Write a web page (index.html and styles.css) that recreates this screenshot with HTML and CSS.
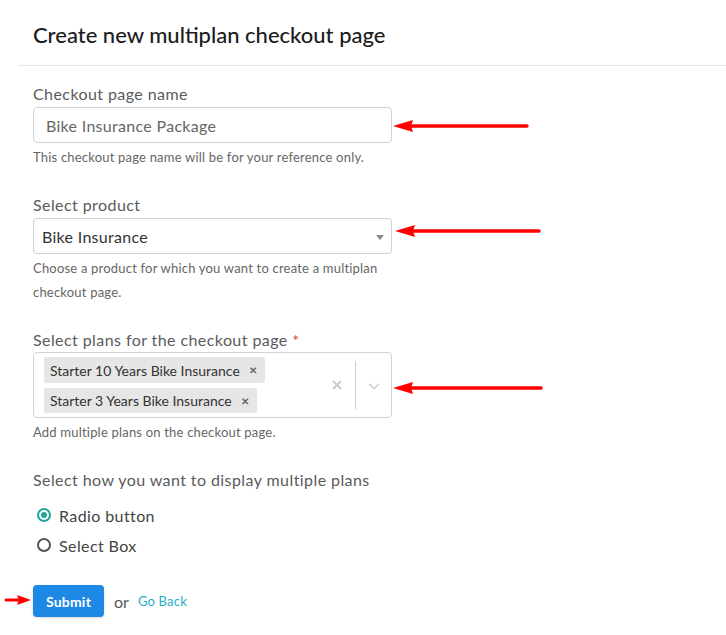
FILE: index.html
```html
<!DOCTYPE html>
<html>
<head>
<meta charset="utf-8">
<link rel="stylesheet" href="styles.css">
</head>
<body>
<div class="page">
  <div class="header">
    <h1 class="title">Create new multiplan checkout page</h1>
  </div>
  <form class="form">
    <div class="field field-first">
      <label class="label">Checkout page name</label>
      <div class="input">Bike Insurance Package</div>
      <div class="help">This checkout page name will be for your reference only.</div>
      <svg class="arrow arrow-1" width="140" height="16" viewBox="0 0 140 16"><path d="M18 8 H134" stroke="#f00" stroke-width="3.4" stroke-linecap="round"/><path d="M0 8 L20 2 L18 8 L20 14 Z" fill="#f00"/></svg>
    </div>
    <div class="field">
      <label class="label">Select product</label>
      <div class="select">
        <span class="select-value">Bike Insurance</span>
        <span class="caret"></span>
      </div>
      <div class="help">Choose a product for which you want to create a multiplan checkout page.</div>
      <svg class="arrow arrow-2" width="150" height="16" viewBox="0 0 150 16"><path d="M18 8 H144" stroke="#f00" stroke-width="3.4" stroke-linecap="round"/><path d="M0 8 L20 2 L18 8 L20 14 Z" fill="#f00"/></svg>
    </div>
    <div class="field">
      <label class="label">Select plans for the checkout page <span class="req">*</span></label>
      <div class="multi">
        <div class="tags">
          <span class="tag"><span class="tag-text">Starter 10 Years Bike Insurance</span><span class="tag-x">&#x2715;</span></span>
          <span class="tag"><span class="tag-text">Starter 3 Years Bike Insurance</span><span class="tag-x">&#x2715;</span></span>
        </div>
        <div class="indicators">
          <svg class="clear" width="12" height="12" viewBox="0 0 12 12"><path d="M2 2 L10 10 M10 2 L2 10" stroke="#ccc" stroke-width="2"/></svg>
          <span class="sep"></span>
          <svg class="chev" width="14" height="10" viewBox="0 0 14 10"><path d="M2 3 L7 7.5 L12 3" stroke="#ccc" stroke-width="1.6" fill="none"/></svg>
        </div>
      </div>
      <div class="help">Add multiple plans on the checkout page.</div>
      <svg class="arrow arrow-3" width="152" height="16" viewBox="0 0 152 16"><path d="M18 8 H148" stroke="#f00" stroke-width="3.4" stroke-linecap="round"/><path d="M0 8 L20 2 L18 8 L20 14 Z" fill="#f00"/></svg>
    </div>
    <div class="field">
      <label class="label">Select how you want to display multiple plans</label>
      <div class="radios">
        <div class="radio-row"><span class="radio checked"></span><span class="radio-label">Radio button</span></div>
        <div class="radio-row"><span class="radio"></span><span class="radio-label">Select Box</span></div>
      </div>
    </div>
    <div class="actions">
      <svg class="arrow arrow-4" width="28" height="12" viewBox="0 0 28 12"><path d="M2 6 H16" stroke="#f00" stroke-width="3" stroke-linecap="round"/><path d="M27 6 L13 1 L15 6 L13 11 Z" fill="#f00"/></svg>
      <button type="button" class="btn">Submit</button>
      <span class="or">or</span>
      <a class="back">Go Back</a>
    </div>
  </form>
</div>
</body>
</html>
```
FILE: styles.css
```css
* { box-sizing: border-box; }
html, body { margin: 0; padding: 0; background: #fff; }
body { font-family: Lato, "Open Sans", sans-serif; color: #555; }
.page { width: 726px; height: 635px; overflow: hidden; }
.header {
  margin-left: 18px;
  padding: 22px 0 0 15px;
  height: 66px;
  border-bottom: 1px solid #e6e6e6;
}
.title {
  margin: 0;
  font-size: 22px;
  line-height: 25px;
  font-weight: 500;
  color: #1c1c1c;
}
.form { padding-left: 33px; width: 392px; }
.field { position: relative; margin-top: 26px; width: 359px; }
.field-first { margin-top: 18px; }
.label {
  display: block;
  font-size: 16px;
  line-height: 20px;
  color: #5b5b5b;
  letter-spacing: 0.42px;
  margin-bottom: 3px;
}
.req { color: #e53935; letter-spacing: 0; }
.input, .select {
  height: 36px;
  border: 1px solid #d2d2d2;
  border-radius: 4px;
  font-size: 16px;
  letter-spacing: 0.3px;
  display: flex;
  align-items: center;
}
.input { padding-left: 12px; color: #666; }
.select { padding: 0 8px 0 8px; color: #333; justify-content: space-between; }
.caret {
  width: 0; height: 0;
  border-left: 4px solid transparent;
  border-right: 4px solid transparent;
  border-top: 5px solid #888;
  margin-right: -1px;
  margin-top: 2px;
}
.help {
  font-size: 13px;
  line-height: 24px;
  color: #666;
  letter-spacing: 0.2px;
  margin-top: 2px;
  padding-right: 10px;
}
.multi {
  height: 66px;
  border: 1px solid #d2d2d2;
  border-radius: 4px;
  display: flex;
  align-items: stretch;
  margin-top: -1px;
}
.tags {
  flex: 1;
  display: flex;
  flex-direction: column;
  align-items: flex-start;
  gap: 5px;
  padding: 4px 0 0 10px;
}
.tag {
  display: flex;
  align-items: center;
  background: #e6e6e6;
  border-radius: 2px;
  height: 26px;
  font-size: 14px;
  color: #333;
}
.tag + .tag { height: 25px; }
.tag-text { padding: 0 5px 0 6px; }
.tag-x { font-size: 10px; font-weight: 700; color: #666; padding: 0 8px 0 4px; }
.indicators {
  display: flex;
  align-items: center;
  padding: 8px 0;
}
.clear { margin-right: 12px; }
.sep { width: 1px; align-self: stretch; background: #ccc; }
.chev { margin: 2px 10px 0 11px; }
.radios { padding-top: 7px; }
.radio-row { display: flex; align-items: center; height: 30px; padding-left: 4px; }
.radio {
  width: 14px; height: 14px;
  border: 2px solid #555;
  border-radius: 50%;
  margin-right: 8px;
  display: flex;
  align-items: center;
  justify-content: center;
}
.radio.checked { border-color: #26a69a; }
.radio.checked::after {
  content: "";
  width: 6px; height: 6px; border-radius: 50%;
  background: #26a69a;
}
.radio-label { font-size: 16px; color: #444; letter-spacing: 0.4px; }
.actions {
  position: relative;
  margin-top: 25px;
  display: flex;
  align-items: center;
}
.btn {
  width: 71px;
  height: 32px;
  border: none;
  border-radius: 4px;
  background: #1e88e5;
  color: #fff;
  font-family: Lato, "Open Sans", sans-serif;
  font-size: 14px;
  font-weight: 700;
  letter-spacing: 0.2px;
  box-shadow: 0 1px 3px rgba(0,0,0,0.15);
  padding: 0;
}
.or { font-size: 16px; color: #555; margin-left: 10px; }
.back { font-size: 13px; color: #1eb2c6; margin-left: 9px; letter-spacing: 0.2px; }
.arrow { position: absolute; }
.arrow-1 { left: 360px; top: 34px; }
.arrow-2 { left: 362px; top: 28px; }
.arrow-3 { left: 360px; top: 50px; }
.arrow-4 { left: -29px; top: 9px; }
```
